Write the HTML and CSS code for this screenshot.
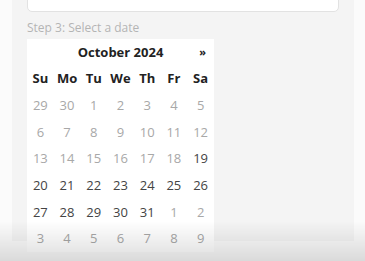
FILE: index.html
```html
<!DOCTYPE html>
<html lang="en">
<head>
    <meta charset="UTF-8">
    <meta name="viewport" content="width=device-width, initial-scale=1.0">
    <title>Booking - Select a date</title>
    <link rel="stylesheet" href="styles.css">
</head>
<body>
    <div class="panel">
        <div class="input-box"></div>
        <p class="step">Step 3: Select a date</p>
        <div class="calendar">
            <div class="cal-head">
                <span class="month">October 2024</span>
                <span class="next">&raquo;</span>
            </div>
            <table class="days">
                <tr class="dow">
                    <th>Su</th><th>Mo</th><th>Tu</th><th>We</th><th>Th</th><th>Fr</th><th>Sa</th>
                </tr>
                <tr>
                    <td class="off">29</td><td class="off">30</td><td class="off">1</td><td class="off">2</td><td class="off">3</td><td class="off">4</td><td class="off">5</td>
                </tr>
                <tr>
                    <td class="off">6</td><td class="off">7</td><td class="off">8</td><td class="off">9</td><td class="off">10</td><td class="off">11</td><td class="off">12</td>
                </tr>
                <tr>
                    <td class="off">13</td><td class="off">14</td><td class="off">15</td><td class="off">16</td><td class="off">17</td><td class="off">18</td><td>19</td>
                </tr>
                <tr>
                    <td>20</td><td>21</td><td>22</td><td>23</td><td>24</td><td>25</td><td>26</td>
                </tr>
                <tr>
                    <td>27</td><td>28</td><td>29</td><td>30</td><td>31</td><td class="off">1</td><td class="off">2</td>
                </tr>
                <tr>
                    <td class="off">3</td><td class="off">4</td><td class="off">5</td><td class="off">6</td><td class="off">7</td><td class="off">8</td><td class="off">9</td>
                </tr>
            </table>
        </div>
    </div>
    <div class="fade"></div>
</body>
</html>
```
FILE: styles.css
```css
body {
    margin: 0;
    padding: 0;
    background-color: #fbfbfb;
    font-family: "Open Sans", "Noto Sans", sans-serif;
    color: #333;
    height: 261px;
    overflow: hidden;
}
.panel {
    background-color: #f4f4f4;
    margin: 0 11px 0 12px;
    padding: 0 15px;
    height: 261px;
}
.input-box {
    height: 30px;
    margin-top: -20px;
    background-color: white;
    border: 1px solid #e2e2e2;
    border-radius: 5px;
}
.step {
    margin: 0;
    padding-top: 7px;
    height: 20px;
    line-height: 18px;
    font-size: 12px;
    color: #b4b4b4;
}
.calendar {
    width: 187px;
    background-color: white;
}
.cal-head {
    position: relative;
    height: 26px;
    line-height: 26px;
    text-align: center;
    font-size: 13px;
    font-weight: bold;
    color: #222;
}
.next {
    position: absolute;
    right: 8px;
    top: 0;
    font-size: 11px;
}
.days {
    width: 187px;
    border-collapse: collapse;
    table-layout: fixed;
}
.days th,
.days td {
    height: 26.7px;
    padding: 0;
    text-align: center;
    font-size: 13px;
}
.days th {
    font-weight: bold;
    color: #222;
}
.days td {
    color: #444;
}
.days td.off {
    color: #a8a8a8;
}
.fade {
    position: fixed;
    left: 0;
    right: 0;
    bottom: 0;
    height: 40px;
    background: linear-gradient(rgba(0, 0, 0, 0), rgba(0, 0, 0, 0.13));
}
```
